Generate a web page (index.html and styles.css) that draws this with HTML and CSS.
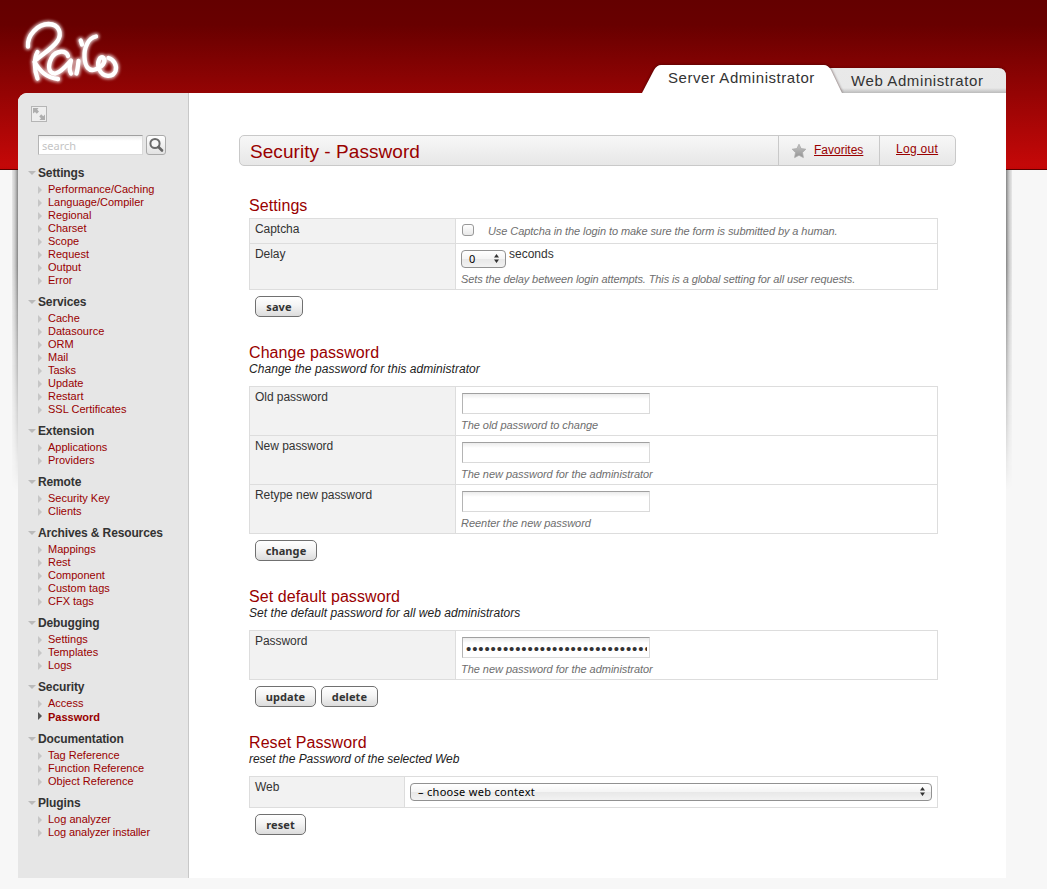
FILE: index.html
```html
<!DOCTYPE html>
<html lang="en">
<head>
<meta charset="utf-8">
<title>Railo Server Administrator</title>
<link rel="stylesheet" href="styles.css">
</head>
<body>
<div class="page">
  <header class="top">
    <svg class="logo" width="110" height="76" viewBox="18 14 110 76" role="img" aria-label="Railo">
      <defs><filter id="glow" x="-20%" y="-20%" width="140%" height="140%"><feGaussianBlur stdDeviation="1.800"/></filter>
      <g id="mark" fill="none" stroke-linecap="round" stroke-linejoin="round">
        <path d="M28 46.500C27 35 38 24 48.500 24C60 24.500 62 34 57.500 41C53 48 44 53 37 59"/>
        <path d="M37.500 52C34 58 34 70 37.500 78.500"/>
        <path d="M34.500 62C40 71 46 77.500 58 79"/>
        <path d="M68 56C66 50 56 50 51.500 58C47 67 49 74 55.500 73.500C62 72 67 65 71 60.500C69.500 66 69 71 71 73.500"/>
        <path d="M78.500 61C78 66 77.500 70 76.500 73.500"/>
        <path d="M80.700 40.500L82 44.500"/>
        <path d="M96 36.500C88 38 84 48 84.500 57C85 67 89 71.500 95 69.500C102 67 106.500 62 103.500 58C100 55 96.500 62 99 69C103 78 113 77.500 115.500 71C117.500 65 113 59 108.500 58"/>
      </g></defs>
      <use href="#mark" stroke="#fff" stroke-width="7" opacity=".7" filter="url(#glow)"/>
      <use href="#mark" stroke="#fff" stroke-width="4.300"/>
    </svg>
    <nav class="tabs">
      <svg class="tabs-bg" width="370" height="34" viewBox="636 59 370 34">
        <defs>
          <linearGradient id="tabg" x1="0" y1="0" x2="0" y2="1"><stop offset="0" stop-color="#e9e9e9"/><stop offset=".8" stop-color="#e8e8e8"/><stop offset="1" stop-color="#bbb"/></linearGradient>
          <filter id="sh" x="-5%" y="-20%" width="110%" height="140%"><feGaussianBlur stdDeviation="1.700"/></filter>
        </defs>
        <path d="M826 93V68H998Q1006 68 1006 76V93Z" filter="url(#sh)" fill="#300" opacity=".6"/>
        <path d="M826 93V68H998Q1006 68 1006 76V93Z" fill="url(#tabg)"/>
        <path d="M642 93L654 70Q657 65 661 65H824Q828 65 831 70L842 93Z" filter="url(#sh)" fill="#200" opacity=".7"/>
        <path d="M642 93L654 70Q657 65 661 65H824Q828 65 831 70L842 93Z" fill="#fff"/>
      </svg>
      <a class="tab tab-active">Server Administrator</a>
      <a class="tab">Web Administrator</a>
    </nav>
  </header>
  <div class="panel">
    <aside class="side">
      <svg class="expand" width="16" height="16" viewBox="0 0 16 16"><rect x=".5" y=".5" width="15" height="15" fill="#eee" stroke="#b5b5b5"/><path d="M2 2H7.500L6.200 3.800L8 5.600L5.800 7.800L4 6L2 7.500Z M14 14H8.500L10 12.300L8.200 10.500L10.200 8.300L12.200 10.200L14 8.500Z" fill="#aeaeae"/></svg>
      <div class="search">
        <input class="field search-field" type="text" placeholder="search">
        <span class="search-btn"><svg width="18" height="18" viewBox="0 0 18 18"><circle cx="8" cy="7.500" r="4.600" fill="#f8f8f8" stroke="#6b6b6b" stroke-width="2"/><path d="M11.500 11L15 14.500" stroke="#666" stroke-width="2.600" stroke-linecap="round"/></svg></span>
      </div>
      <ul class="menu">
        <li class="group">Settings<ul><li>Performance/Caching</li><li>Language/Compiler</li><li>Regional</li><li>Charset</li><li>Scope</li><li>Request</li><li>Output</li><li>Error</li></ul></li>
        <li class="group">Services<ul><li>Cache</li><li>Datasource</li><li>ORM</li><li>Mail</li><li>Tasks</li><li>Update</li><li>Restart</li><li>SSL Certificates</li></ul></li>
        <li class="group">Extension<ul><li>Applications</li><li>Providers</li></ul></li>
        <li class="group">Remote<ul><li>Security Key</li><li>Clients</li></ul></li>
        <li class="group">Archives &amp; Resources<ul><li>Mappings</li><li>Rest</li><li>Component</li><li>Custom tags</li><li>CFX tags</li></ul></li>
        <li class="group">Debugging<ul><li>Settings</li><li>Templates</li><li>Logs</li></ul></li>
        <li class="group">Security<ul><li>Access</li><li class="current">Password</li></ul></li>
        <li class="group">Documentation<ul><li>Tag Reference</li><li>Function Reference</li><li>Object Reference</li></ul></li>
        <li class="group">Plugins<ul><li>Log analyzer</li><li class="tight">Log analyzer installer</li></ul></li>
      </ul>
    </aside>
    <main class="main">
      <div class="titlebar">
        <h1>Security - Password</h1>
        <div class="fav"><svg width="16" height="16" viewBox="0 0 16 16"><defs><linearGradient id="st" x1="0" y1="0" x2="0" y2="1"><stop offset="0" stop-color="#c6c6c6"/><stop offset="1" stop-color="#939393"/></linearGradient></defs><path d="M8 1.200L10.100 5.600L14.800 6.200L11.500 9.600L12.400 14.600L8 12.300L3.600 14.600L4.500 9.600L1.200 6.200L5.900 5.600Z" fill="url(#st)" stroke="#aaa" stroke-width=".8" stroke-linejoin="round"/></svg><a class="link">Favorites</a></div>
        <div class="out"><a class="link">Log out</a></div>
      </div>

      <section class="block">
        <h2>Settings</h2>
        <table class="tbl">
          <tr class="r-check"><th>Captcha</th><td><div class="check-line"><span class="check"></span><span class="hint">Use Captcha in the login to make sure the form is submitted by a human.</span></div></td></tr>
          <tr class="r-delay"><th>Delay</th><td><div class="delay-line"><span class="select small">0<svg width="5" height="9" viewBox="0 0 5 9"><path d="M2.500 0L5 3.500H0ZM2.500 9L0 5.500H5Z" fill="#333"/></svg></span><span class="unit">seconds</span></div><div class="hint long">Sets the delay between login attempts. This is a global setting for all user requests.</div></td></tr>
        </table>
        <div class="actions"><button class="btn w48">save</button></div>
      </section>

      <section class="block b2">
        <h2>Change password</h2>
        <p class="intro">Change the password for this administrator</p>
        <table class="tbl">
          <tr class="r-field"><th>Old password</th><td><input class="field" type="text"><div class="hint">The old password to change</div></td></tr>
          <tr class="r-field"><th>New password</th><td><input class="field" type="text"><div class="hint">The new password for the administrator</div></td></tr>
          <tr class="r-field"><th>Retype new password</th><td><input class="field" type="text"><div class="hint">Reenter the new password</div></td></tr>
        </table>
        <div class="actions"><button class="btn w62">change</button></div>
      </section>

      <section class="block b2">
        <h2>Set default password</h2>
        <p class="intro">Set the default password for all web administrators</p>
        <table class="tbl">
          <tr class="r-field"><th>Password</th><td><div class="field dots"><span>••••••••••••••••••••••••••••••</span></div><div class="hint">The new password for the administrator</div></td></tr>
        </table>
        <div class="actions"><button class="btn w61">update</button><button class="btn w57">delete</button></div>
      </section>

      <section class="block b2">
        <h2>Reset Password</h2>
        <p class="intro reset-intro">reset the Password of the selected Web</p>
        <table class="tbl narrow">
          <tr class="r-web"><th>Web</th><td><span class="select wide">– choose web context<svg width="5" height="9" viewBox="0 0 5 9"><path d="M2.500 0L5 3.500H0ZM2.500 9L0 5.500H5Z" fill="#333"/></svg></span></td></tr>
        </table>
        <div class="actions"><button class="btn w51">reset</button></div>
      </section>
    </main>
  </div>
</div>
</body>
</html>
```

FILE: styles.css
```css
* { box-sizing: border-box; }
html { background: #f7f7f7; }
body { margin: 0; height: 889px; overflow: hidden; font-family: "Liberation Sans", Arial, sans-serif; font-size: 12px; color: #333;
  background: linear-gradient(#640000 0, #680000 25px, #c40808 165px, #c20606 169px) no-repeat 0 0 / 100% 169px, linear-gradient(#5c0000, #5c0000) no-repeat 0 169px / 100% 1px, #f7f7f7; }
ul { list-style: none; margin: 0; padding: 0; }
.page { width: 988px; margin-left: 18px; }
.top { height: 93px; display: flex; justify-content: space-between; align-items: flex-start; padding-top: 14px; }
.tabs { position: relative; display: flex; width: 370px; height: 34px; margin-top: 45px; }
.tabs-bg { position: absolute; left: 0; top: 0; overflow: hidden; }
.tab { position: relative; font-size: 15px; line-height: 18px; letter-spacing: .6px; color: #333; padding: 13px 0 0 36px; white-space: nowrap; }
.tab-active { width: 179px; padding: 10px 0 0 32px; letter-spacing: .55px; }
.panel { position: relative; display: flex; height: 785px; background: #fff; border-top-left-radius: 9px; }
.panel::before, .panel::after { content: ""; position: absolute; top: 77px; width: 6px; height: 320px; -webkit-mask-image: linear-gradient(#000, #000 30%, transparent); mask-image: linear-gradient(#000, #000 30%, transparent); }
.panel::before { left: -6px; background: linear-gradient(to left, #858585, #c8c8c8 50%, #e8e8e8); }
.panel::after { right: -6px; background: linear-gradient(to right, #858585, #c8c8c8 50%, #e8e8e8); }
.side { width: 171px; background: #e6e6e6; border-right: 1px solid #c8c8c8; border-top-left-radius: 9px; padding: 13px 0 0 10px; }
.expand { display: block; margin-left: 3px; }
.search { display: flex; gap: 3px; margin: 12px 0 0 10px; height: 22px; }
.field { display: block; width: 188px; height: 21px; padding: 0 4px; border: 1px solid #dadada; border-top-color: #a0a0a0; border-left-color: #b4b4b4; background: linear-gradient(#ececec, #fff 5px); font: 11px "Noto Sans", sans-serif; color: #333; outline: 0; border-radius: 0; }
.search-field { width: 105px; height: 20px; margin-top: 1px; padding: 1px 3px 0; }
.search-field::placeholder { color: #c4c4c4; opacity: 1; }
.search-btn { width: 20px; height: 20px; margin-top: 1px; border: 1px solid #aaa; border-radius: 3px; background: linear-gradient(#fff, #e2e2e2); }
.search-btn svg { display: block; }
.menu { margin-top: 10px; }
.group { font-size: 12px; font-weight: bold; line-height: 15px; letter-spacing: -.13px; padding-left: 10px; margin-bottom: 8px; color: #333; position: relative; }
.group::before { content: ""; position: absolute; left: 0; top: 5px; border: 4px solid transparent; border-top-color: #bababa; border-bottom: 0; }
.group ul { padding-top: 2px; font-weight: normal; font-size: 11px; line-height: 13px; color: #900; }
.group li { padding-left: 10px; position: relative; letter-spacing: 0; }
.group .tight { letter-spacing: -.09px; }
.group li::before { content: ""; position: absolute; left: 0; top: 3px; border: 4px solid transparent; border-left-color: #c6c6c6; border-right: 0; }
.group .current { font-weight: bold; line-height: 14px; }
.group .current::before { border-left-color: #555; top: 2px; }
.main { width: 817px; padding: 42px 0 0 50px; }
.titlebar { display: flex; width: 717px; height: 31px; border: 1px solid #c9c9c9; border-radius: 5px; background: linear-gradient(#f7f7f7, #e7e7e7); }
h1 { flex: 1; margin: 0; padding-left: 10px; font-size: 19px; line-height: 31px; font-weight: normal; letter-spacing: .05px; color: #900; }
.fav { width: 101px; border-left: 1px solid #c9c9c9; display: flex; padding: 7px 0 0 12px; gap: 7px; }
.out { width: 76px; border-left: 1px solid #c9c9c9; padding: 6px 0 0 16px; letter-spacing: .3px; }
.link { color: #900; text-decoration: underline; line-height: 14px; }
.block { margin-left: 10px; width: 689px; padding-top: 30px; }
.b2 { padding-top: 26px; }
h2 { margin: 0; font-size: 16px; line-height: 20px; height: 19px; font-weight: normal; letter-spacing: .08px; color: #900; white-space: nowrap; }
.intro { margin: 0 0 10px; height: 14px; font-style: italic; line-height: 14px; letter-spacing: .05px; color: #222; }
.reset-intro { letter-spacing: -.04px; }
.block > h2 + .tbl { margin-top: 3px; }
.tbl { width: 689px; border-collapse: collapse; table-layout: fixed; }
.tbl th, .tbl td { border: 1px solid #ddd; padding: 3px 5px 0; vertical-align: top; text-align: left; font-weight: normal; line-height: 14px; }
.tbl th { width: 206px; background: #f2f2f2; letter-spacing: -.05px; }
.narrow th { width: 155px; }
.r-check { height: 25px; }
.r-delay { height: 46px; }
.r-field { height: 49px; }
.r-web { height: 31px; }
.hint { font-size: 11px; font-style: italic; color: #6e6e6e; line-height: 13px; letter-spacing: -.04px; white-space: nowrap; }
.long { letter-spacing: -.11px; }
.check-line { display: flex; gap: 14px; padding: 2px 0 0 1px; }
.check { width: 12px; height: 12px; border: 1px solid #999; border-radius: 3px; background: linear-gradient(#fff, #e8e8e8); }
.check-line .hint { padding-top: 1px; letter-spacing: -.08px; }
.delay-line { display: flex; gap: 3px; height: 26px; }
.select { display: flex; align-items: center; justify-content: space-between; height: 18px; border: 1px solid #919191; border-radius: 4px; background: linear-gradient(#fff, #f4f4f4 50%, #e8e8e8 51%, #f2f2f2); font-family: "Noto Sans", sans-serif; font-size: 11px; line-height: 13px; letter-spacing: .3px; color: #000; padding: 0 6px 1px 7px; }
.small { width: 45px; margin-top: 3px; }
.wide { width: 522px; margin-top: 3px; }
.r-field .field { margin: 3px 0 0 1px; }
.r-field .hint { margin-top: 5px; }
.dots { overflow: hidden; white-space: nowrap; padding: 0 2px 0 3px; }
.dots span { display: block; overflow: hidden; font: 15px "Liberation Sans", sans-serif; line-height: 21px; letter-spacing: .9px; }
.actions { display: flex; gap: 5px; padding: 6px 0 0 6px; height: 27px; }
.btn { height: 21px; padding: 0 0 1px; border: 1px solid #707070; border-radius: 5px; background: linear-gradient(#fff, #f4f4f4 45%, #dcdcdc); font: bold 11px "Noto Sans", sans-serif; color: #333; letter-spacing: .1px; }
.w48 { width: 48px; }
.w51 { width: 51px; }
.w57 { width: 57px; }
.w61 { width: 61px; }
.w62 { width: 62px; }
```
